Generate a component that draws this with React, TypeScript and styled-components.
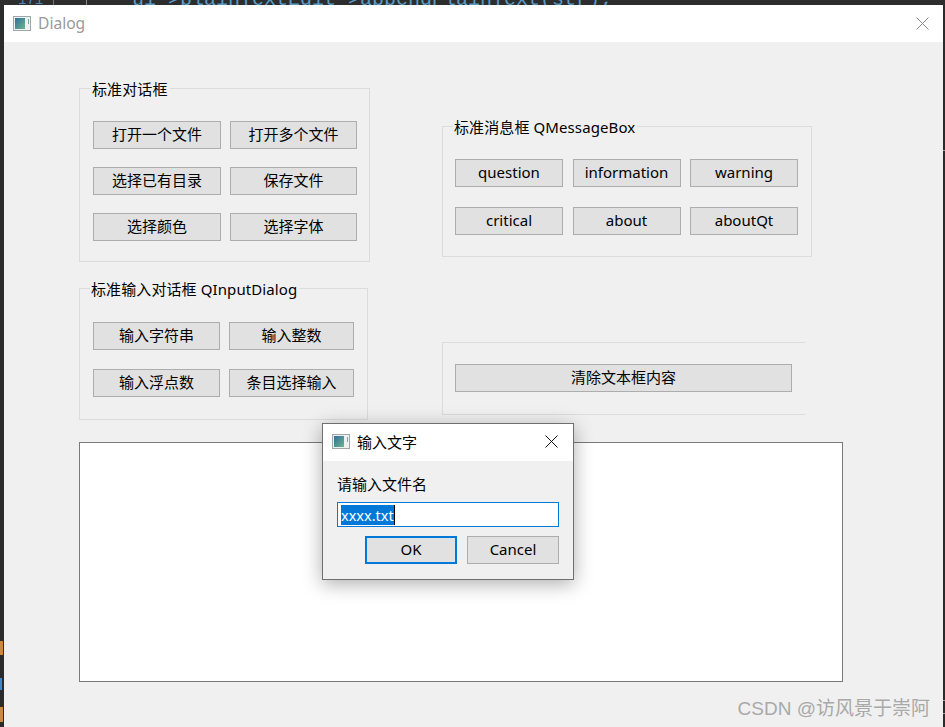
import styled, { createGlobalStyle } from 'styled-components';

const GlobalStyle = createGlobalStyle`
  html, body {
    margin: 0;
    padding: 0;
    background: #2b2b2b;
    overflow: hidden;
  }
  * {
    box-sizing: border-box;
  }
`;

const fontStack = `"Noto Sans", "Noto Sans CJK SC", sans-serif`;

const leftButtons = ['打开一个文件', '打开多个文件', '选择已有目录', '保存文件', '选择颜色', '选择字体'];
const inputButtons = ['输入字符串', '输入整数', '输入浮点数', '条目选择输入'];
const messageButtons = ['question', 'information', 'warning', 'critical', 'about', 'aboutQt'];

function WindowIcon() {
  return (
    <IconSvg width="18" height="15" viewBox="0 0 18 15">
      <defs>
        <linearGradient id="pane" x1="0" y1="0" x2="1" y2="1">
          <stop offset="0" stopColor="#2f6f9f" />
          <stop offset="1" stopColor="#6fb58a" />
        </linearGradient>
      </defs>
      <rect x="0.5" y="0.5" width="17" height="14" fill="#eef1f2" stroke="#a3a6a8" />
      <rect x="2" y="2" width="10" height="11" fill="url(#pane)" />
      <rect x="15" y="3" width="1" height="5" fill="#7fa8a0" />
    </IconSvg>
  );
}

function CloseIcon({ color }: { color: string }) {
  return (
    <svg width="13" height="13" viewBox="0 0 13 13">
      <path d="M0.5 0.5 L12.5 12.5 M12.5 0.5 L0.5 12.5" stroke={color} strokeWidth="1" fill="none" />
    </svg>
  );
}

export default function App() {
  return (
    <>
      <GlobalStyle />
      <Page>
        <TopStrip>
          <LineNumber>171</LineNumber>
          <GutterMark />
          <CodeLine>ui-&gt;plainTextEdit-&gt;appendPlainText(str);</CodeLine>
        </TopStrip>
        <Middle>
          <LeftStrip>
            <Glyph $color="#c98a45" $width={3} $top={636} $height={14} />
            <Glyph $color="#3f87c9" $width={2} $top={23} $height={12} />
            <Glyph $color="#c98a45" $width={3} $top={17} $height={15} />
          </LeftStrip>
          <Window>
            <TitleBar>
              <WindowIcon />
              <MainTitle>Dialog</MainTitle>
              <CloseButton>
                <CloseIcon color="#8a8a8a" />
              </CloseButton>
            </TitleBar>
            <Content>
              <Columns>
                <LeftColumn>
                  <Group $width={291} $height={174} $padTop={32} $padLeft={13}>
                    <GroupTitle $left={11}>标准对话框</GroupTitle>
                    <ButtonGrid $columns="128px 127px" $colGap={9} $rowGap={18}>
                      {leftButtons.map((label) => (
                        <PushButton key={label}>{label}</PushButton>
                      ))}
                    </ButtonGrid>
                  </Group>
                  <Group $width={289} $height={132} $padTop={33} $padLeft={13}>
                    <GroupTitle $left={10}>标准输入对话框 QInputDialog</GroupTitle>
                    <ButtonGrid $columns="127px 125px" $colGap={9} $rowGap={19}>
                      {inputButtons.map((label) => (
                        <PushButton key={label}>{label}</PushButton>
                      ))}
                    </ButtonGrid>
                  </Group>
                </LeftColumn>
                <RightColumn>
                  <Group $width={370} $height={131} $padTop={32} $padLeft={12}>
                    <GroupTitle $left={10}>标准消息框 QMessageBox</GroupTitle>
                    <ButtonGrid $columns="108px 108px 108px" $colGap={9.5} $rowGap={20}>
                      {messageButtons.map((label) => (
                        <PushButton key={label}>{label}</PushButton>
                      ))}
                    </ButtonGrid>
                  </Group>
                  <ClearGroup>
                    <PushButton>清除文本框内容</PushButton>
                  </ClearGroup>
                </RightColumn>
              </Columns>
              <TextArea />
            </Content>

            <InputDialog>
              <DialogTitleBar>
                <WindowIcon />
                <DialogTitle>输入文字</DialogTitle>
                <DialogClose>
                  <CloseIcon color="#111" />
                </DialogClose>
              </DialogTitleBar>
              <DialogBody>
                <DialogLabel>请输入文件名</DialogLabel>
                <LineEdit>
                  <Selected>xxxx.txt</Selected>
                  <Caret />
                </LineEdit>
                <DialogButtons>
                  <DialogButton $primary>OK</DialogButton>
                  <DialogButton>Cancel</DialogButton>
                </DialogButtons>
              </DialogBody>
            </InputDialog>

            <Watermark>CSDN @访风景于崇阿</Watermark>
          </Window>
          <RightStrip>
            <Tick $top={145} />
            <Tick $top={549} />
            <Tick $top={12} />
          </RightStrip>
        </Middle>
      </Page>
    </>
  );
}

const Page = styled.div`
  width: 945px;
  height: 727px;
  display: flex;
  flex-direction: column;
  overflow: hidden;
  background: #2b2b2b;
  font-family: ${fontStack};
`;

const TopStrip = styled.div`
  height: 5px;
  flex: none;
  display: flex;
  align-items: flex-end;
  overflow: hidden;
  background: #2d2d2e;
  font-family: "Liberation Mono", monospace;
  font-size: 20px;
  line-height: 10px;
`;

const LineNumber = styled.span`
  width: 53px;
  padding-left: 18px;
  color: #4f88b8;
  font-size: 14px;
`;

const GutterMark = styled.span`
  width: 1px;
  height: 5px;
  margin-right: 32px;
  background: #3f9a3f;
  box-shadow: 33px 0 0 #8a8a8a;
`;

const CodeLine = styled.span`
  margin-left: 46px;
  color: #5a9bc4;
  white-space: pre;
`;

const Middle = styled.div`
  flex: 1;
  display: flex;
  min-height: 0;
`;

const LeftStrip = styled.div`
  width: 4px;
  flex: none;
  display: flex;
  flex-direction: column;
  align-items: flex-start;
  background: #2b2b2b;
`;

const Glyph = styled.span<{ $color: string; $width: number; $top: number; $height: number }>`
  width: ${(props) => props.$width}px;
  margin-top: ${(props) => props.$top}px;
  height: ${(props) => props.$height}px;
  background: ${(props) => props.$color};
`;

const RightStrip = styled.div`
  width: 2px;
  flex: none;
  display: flex;
  flex-direction: column;
  background: #2b2b2b;
`;

const Tick = styled.span<{ $top: number }>`
  height: 1px;
  margin-top: ${(props) => props.$top}px;
  background: #9a9a9a;
`;

const Window = styled.div`
  position: relative;
  width: 939px;
  flex: none;
  display: flex;
  flex-direction: column;
  background: #f0f0f0;
`;

const IconSvg = styled.svg`
  flex: none;
`;

const TitleBar = styled.div`
  height: 37px;
  flex: none;
  display: flex;
  align-items: center;
  padding: 0 14px 0 9px;
  background: #fff;
`;

const MainTitle = styled.span`
  margin-left: 7px;
  color: #9a9a9a;
  font-size: 15.6px;
  line-height: 36px;
  height: 37px;
`;

const CloseButton = styled.span`
  margin-left: auto;
  display: flex;
`;

const Content = styled.div`
  flex: 1;
  padding: 46px 0 0 75px;
  display: flex;
  flex-direction: column;
`;

const Columns = styled.div`
  display: flex;
  align-items: flex-start;
`;

const LeftColumn = styled.div`
  width: 291px;
  flex: none;
  display: flex;
  flex-direction: column;
  gap: 26px;
`;

const RightColumn = styled.div`
  margin-left: 72px;
  padding-top: 38px;
  display: flex;
  flex-direction: column;
  gap: 85px;
`;

const Group = styled.section<{ $width: number; $height: number; $padTop: number; $padLeft: number }>`
  position: relative;
  width: ${(props) => props.$width}px;
  height: ${(props) => props.$height}px;
  padding: ${(props) => props.$padTop}px 0 0 ${(props) => props.$padLeft}px;
  border: 1px solid #dcdcdc;
`;

const GroupTitle = styled.h2<{ $left: number }>`
  position: absolute;
  top: -10px;
  left: ${(props) => props.$left}px;
  margin: 0;
  padding: 0 2px 0 1px;
  background: #f0f0f0;
  color: #000;
  font-size: 15px;
  font-weight: 400;
  letter-spacing: 0.1px;
  line-height: 20px;
  white-space: nowrap;
`;

const ButtonGrid = styled.div<{ $columns: string; $colGap: number; $rowGap: number }>`
  display: grid;
  grid-template-columns: ${(props) => props.$columns};
  column-gap: ${(props) => props.$colGap}px;
  row-gap: ${(props) => props.$rowGap}px;
`;

const PushButton = styled.button`
  height: 28px;
  width: 100%;
  padding: 0 0 1px;
  background: #e1e1e1;
  border: 1px solid #adadad;
  border-radius: 0;
  color: #000;
  font-family: ${fontStack};
  font-size: 15px;
  line-height: 25px;
`;

const ClearGroup = styled.section`
  width: 363px;
  height: 73px;
  padding: 21px 13px 0 12px;
  border: 1px solid #dcdcdc;
  border-right: none;
`;

const TextArea = styled.div`
  width: 764px;
  height: 240px;
  margin-top: 22px;
  background: #fff;
  border: 1px solid #7a7a7a;
`;

const InputDialog = styled.div`
  position: absolute;
  left: 318px;
  top: 418px;
  width: 252px;
  height: 157px;
  display: flex;
  flex-direction: column;
  background: #f0f0f0;
  border: 1px solid #6f6f6f;
  box-shadow: 0 4px 18px rgba(0, 0, 0, 0.32);
`;

const DialogTitleBar = styled.div`
  height: 37px;
  flex: none;
  display: flex;
  align-items: center;
  padding: 0 15px 2px 9px;
  background: #fff;
`;

const DialogTitle = styled.span`
  margin-left: 7px;
  color: #000;
  font-size: 15px;
`;

const DialogClose = styled.span`
  margin-left: auto;
  display: flex;
`;

const DialogBody = styled.div`
  flex: 1;
  padding: 13px 14px 0;
  display: flex;
  flex-direction: column;
`;

const DialogLabel = styled.div`
  color: #000;
  font-size: 15px;
  line-height: 20px;
`;

const LineEdit = styled.div`
  width: 222px;
  height: 25px;
  margin-top: 8px;
  padding: 2px 0 0 3px;
  display: flex;
  background: #fff;
  border: 1px solid #0078d7;
`;

const Selected = styled.span`
  height: 20px;
  background: #0078d7;
  color: #fff;
  font-size: 14.5px;
  line-height: 20px;
`;

const Caret = styled.span`
  width: 1px;
  height: 20px;
  background: #000;
`;

const DialogButtons = styled.div`
  margin-top: 9px;
  display: flex;
  justify-content: flex-end;
  gap: 10px;
`;

const DialogButton = styled.button<{ $primary?: boolean }>`
  width: 92px;
  height: 28px;
  padding: 0 0 2px;
  background: #e1e1e1;
  border: ${(props) => (props.$primary ? '2px solid #0078d7' : '1px solid #adadad')};
  border-radius: 0;
  color: #000;
  font-family: ${fontStack};
  font-size: 15px;
`;

const Watermark = styled.div`
  position: absolute;
  right: 13px;
  bottom: 6px;
  color: #a9a9a9;
  font-family: "Liberation Sans", "Noto Sans CJK SC", sans-serif;
  font-size: 19px;
  line-height: 24px;
  white-space: nowrap;
`;
